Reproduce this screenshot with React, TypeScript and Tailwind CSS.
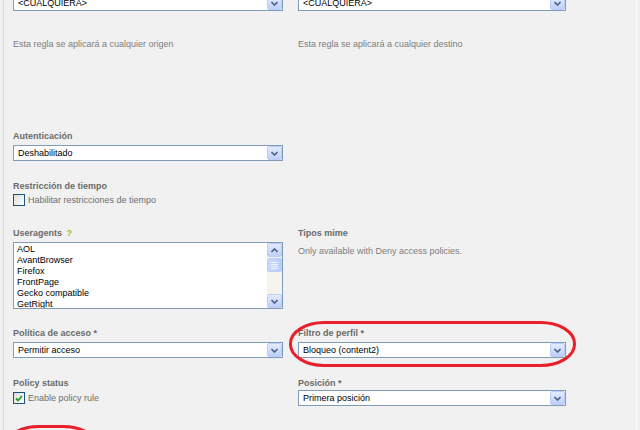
import React from "react";

const Chevron = ({ up = false }: { up?: boolean }) => (
  <svg width="7" height="5" viewBox="0 0 7 5" className="block">
    {up ? (
      <path d="M0.5 4 L3.5 1 L6.5 4" fill="none" stroke="#4d6185" strokeWidth="1.6" />
    ) : (
      <path d="M0.5 1 L3.5 4 L6.5 1" fill="none" stroke="#4d6185" strokeWidth="1.6" />
    )}
  </svg>
);

const ArrowBtn = ({ up = false, h = "h-[14px]" }: { up?: boolean; h?: string }) => (
  <div
    className={`w-[15px] ${h} shrink-0 flex items-center justify-center rounded-[2px] border border-[#bccdf5] bg-gradient-to-b from-[#e3ebfe] to-[#bdd0fb]`}
  >
    <Chevron up={up} />
  </div>
);

const Select = ({ value }: { value: string }) => (
  <div className="h-[16px] border border-[#7f9db9] bg-white flex items-center">
    <div className="flex-1 pl-[4px] text-black leading-[14px] truncate">{value}</div>
    <ArrowBtn />
  </div>
);

const Label = ({ children }: { children: React.ReactNode }) => (
  <div className="h-[11px] leading-[13px] font-bold text-[#6a6a6a]">{children}</div>
);

const Checkbox = ({ checked = false }: { checked?: boolean }) => (
  <div className="w-[12px] h-[12px] border border-[#1c5180] bg-gradient-to-br from-[#dcdcd7] to-[#ffffff] flex items-center justify-center shrink-0">
    {checked && (
      <svg width="8" height="7" viewBox="0 0 8 7" className="block">
        <path d="M1 3.5 L3 5.5 L7 1" fill="none" stroke="#21a121" strokeWidth="1.8" />
      </svg>
    )}
  </div>
);

export default function App() {
  const agents = ["AOL", "AvantBrowser", "Firefox", "FrontPage", "Gecko compatible", "GetRight"];
  return (
    <div className="w-[640px] h-[430px] overflow-hidden relative bg-[#f1f1f1] font-['Liberation_Sans',Arial,sans-serif] text-[9px] flex">
      <div className="ml-[3px] w-[634px] h-full border-l border-[#d9d9d9] border-r border-r-[#fbfbfb] pl-[9px]">
        {/* Row 1 */}
        <div className="grid grid-cols-[270px_268px] gap-x-[15px] mt-[-5px]">
          <Select value="<CUALQUIERA>" />
          <Select value="<CUALQUIERA>" />
        </div>
        <div className="grid grid-cols-[270px_268px] gap-x-[15px] mt-[28px] leading-[11px] text-[#7d7d7d]">
          <div>Esta regla se aplicará a cualquier origen</div>
          <div>Esta regla se aplicará a cualquier destino</div>
        </div>

        {/* Autenticación */}
        <div className="w-[270px] mt-[80px]">
          <Label>Autenticación</Label>
          <div className="mt-[4px]">
            <Select value="Deshabilitado" />
          </div>
        </div>

        {/* Restricción */}
        <div className="w-[270px] mt-[19px]">
          <Label>Restricción de tiempo</Label>
          <div className="mt-[3px] flex items-center gap-[3px] h-[12px]">
            <Checkbox />
            <span className="text-[#6e6e6e] leading-[11px]">Habilitar restricciones de tiempo</span>
          </div>
        </div>

        {/* Useragents / Tipos mime */}
        <div className="grid grid-cols-[270px_268px] gap-x-[15px] mt-[21px]">
          <div>
            <Label>
              Useragents <span className="text-[#8fbf2a] ml-[2px]">?</span>
            </Label>
            <div className="mt-[4px] h-[67px] border border-[#7f9db9] bg-white flex">
              <div className="flex-1 pl-[3px] pt-[1px] text-black leading-[11px] overflow-hidden">
                {agents.map((a) => (
                  <div key={a} className="whitespace-nowrap">{a}</div>
                ))}
              </div>
              <div className="w-[15px] bg-[#f4f3ee] flex flex-col justify-between">
                <ArrowBtn up h="h-[14px]" />
                <div className="flex-1 pt-[1px]">
                  <div className="h-[14px] rounded-[2px] border border-[#bccdf5] bg-gradient-to-r from-[#c9d8fc] to-[#b9cdfa] flex flex-col items-center justify-center gap-[1px]">
                    <div className="w-[7px] h-px bg-[#eef3ff]" />
                    <div className="w-[7px] h-px bg-[#eef3ff]" />
                    <div className="w-[7px] h-px bg-[#eef3ff]" />
                    <div className="w-[7px] h-px bg-[#eef3ff]" />
                  </div>
                </div>
                <ArrowBtn h="h-[14px]" />
              </div>
            </div>
          </div>
          <div>
            <Label>Tipos mime</Label>
            <div className="mt-[8px] leading-[11px] text-[#7d7d7d]">Only available with Deny access policies.</div>
          </div>
        </div>

        {/* Política / Filtro */}
        <div className="grid grid-cols-[270px_268px] gap-x-[15px] mt-[18px]">
          <div>
            <Label>Política de acceso *</Label>
            <div className="mt-[4px]">
              <Select value="Permitir acceso" />
            </div>
          </div>
          <div>
            <Label>Filtro de perfil *</Label>
            <div className="mt-[4px]">
              <Select value="Bloqueo (content2)" />
            </div>
          </div>
        </div>

        {/* Policy status / Posición */}
        <div className="grid grid-cols-[270px_268px] gap-x-[15px] mt-[19px]">
          <div>
            <Label>Policy status</Label>
            <div className="mt-[4px] flex items-center gap-[3px] h-[12px]">
              <Checkbox checked />
              <span className="text-[#6e6e6e] leading-[11px]">Enable policy rule</span>
            </div>
          </div>
          <div>
            <Label>Posición *</Label>
            <div className="mt-[2px]">
              <Select value="Primera posición" />
            </div>
          </div>
        </div>
      </div>

      {/* red annotation marks */}
      <svg className="absolute left-0 top-0 pointer-events-none" width="640" height="430" viewBox="0 0 640 430">
        <rect x="290.5" y="322.5" width="284" height="43" rx="34" ry="21" fill="none" stroke="#e8202a" strokeWidth="3" />
        <rect x="5" y="426.5" width="92" height="40" rx="34" ry="20" fill="none" stroke="#e8202a" strokeWidth="3" />
      </svg>
    </div>
  );
}
